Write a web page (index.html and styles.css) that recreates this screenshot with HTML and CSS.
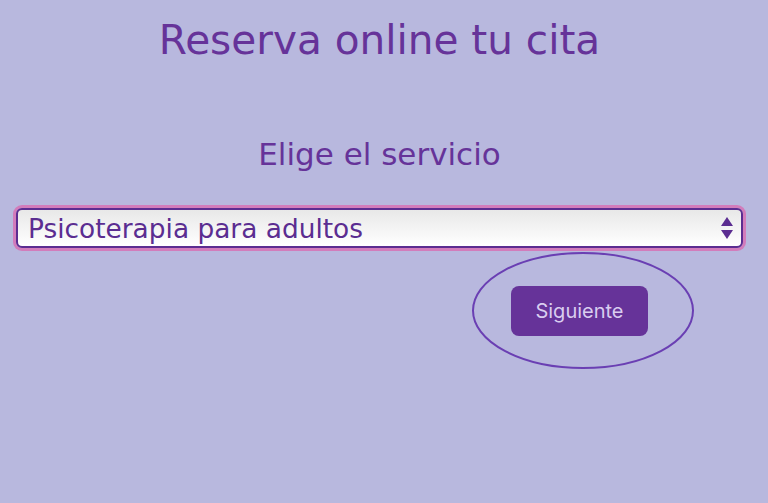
FILE: index.html
```html
<!DOCTYPE html>
<html lang="es">
<head>
  <meta charset="UTF-8">
  <meta name="viewport" content="width=device-width, initial-scale=1.0">
  <title>Reserva online tu cita</title>
  <link rel="stylesheet" href="styles.css">
</head>
<body>
  <main class="booking">
    <h1 class="title">Reserva online tu cita</h1>
    <h2 class="subtitle">Elige el servicio</h2>

    <div class="select-wrap">
      <select class="service" aria-label="Servicio">
        <option>Psicoterapia para adultos</option>
        <option>Psicoterapia para niños</option>
        <option>Terapia de pareja</option>
      </select>
      <svg class="select-arrows" width="14" height="24" viewBox="0 0 14 24" aria-hidden="true">
        <path d="M7 1 L13 10 L1 10 Z" />
        <path d="M1 14 L13 14 L7 23 Z" />
      </svg>
    </div>

    <div class="actions">
      <div class="next-wrap">
        <button class="next" type="button">Siguiente</button>
        <!-- hand drawn ring round the button -->
        <svg class="ring" width="226" height="121" viewBox="0 0 226 121" aria-hidden="true">
          <ellipse cx="113" cy="60.5" rx="110" ry="57.5" />
        </svg>
      </div>
    </div>
  </main>
</body>
</html>
```

FILE: styles.css
```css
:root {
  --fondo: #b8b8de;
  --morado: #663399;
  --morado-oscuro: #5b2d91;
  --rosa: #d27cbb;
  --lavanda: #d9cdf0;
}

* {
  margin: 0;
  padding: 0;
  box-sizing: border-box;
}

body {
  background: var(--fondo);
  font-family: 'DejaVu Sans', sans-serif;
  min-height: 100vh;
}

.booking {
  padding: 14px 22px 0 13px;
}

.title {
  text-align: center;
  color: var(--morado);
  font-weight: 400;
  font-size: 40.6px;
  line-height: 52px;
}

.subtitle {
  text-align: center;
  color: var(--morado);
  font-weight: 400;
  font-size: 31px;
  line-height: 40px;
  margin-top: 68px;
}

.select-wrap {
  position: relative;
  margin: 34px 3px 0;
}

.service {
  appearance: none;
  -webkit-appearance: none;
  display: block;
  width: 100%;
  height: 40px;
  border: 2px solid var(--morado-oscuro);
  border-radius: 6px;
  box-shadow: 0 0 0 3px var(--rosa);
  background: linear-gradient(#e8e8e8, #ffffff);
  color: var(--morado-oscuro);
  font-family: inherit;
  font-size: 26.4px;
  padding: 0 40px 0 10px;
  outline: none;
}

.select-arrows {
  position: absolute;
  right: 9px;
  top: 8px;
  fill: var(--morado-oscuro);
  pointer-events: none;
}

.actions {
  display: flex;
  justify-content: flex-end;
  padding-right: 98px;
  margin-top: 38px;
}

.next-wrap {
  position: relative;
}

.next {
  display: block;
  width: 137px;
  height: 50px;
  border: none;
  border-radius: 8px;
  background: var(--morado);
  color: var(--lavanda);
  font-family: 'Inter', sans-serif;
  font-size: 20px;
}

.ring {
  position: absolute;
  left: -41px;
  top: -36px;
  fill: none;
  stroke: #6a3fb3;
  stroke-width: 2;
  pointer-events: none;
}
```
